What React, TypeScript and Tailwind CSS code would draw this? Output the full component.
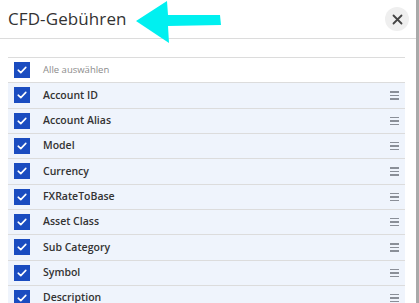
import React from "react";

const items = [
  "Account ID",
  "Account Alias",
  "Model",
  "Currency",
  "FXRateToBase",
  "Asset Class",
  "Sub Category",
  "Symbol",
  "Description",
  "Conid",
];

function Check() {
  return (
    <div className="w-4 h-4 bg-[#1a4cc0] flex items-center justify-center shrink-0">
      <svg width="10" height="8" viewBox="0 0 10 8" fill="none">
        <path d="M1.2 4.2 L3.8 6.6 L8.8 1.4" stroke="white" strokeWidth="1.6" strokeLinecap="round" strokeLinejoin="round" />
      </svg>
    </div>
  );
}

function Handle() {
  return (
    <div className="flex flex-col gap-[2px] w-[9px]">
      <div className="h-[1.5px] bg-[#8a8f98]" />
      <div className="h-[1.5px] bg-[#8a8f98]" />
      <div className="h-[1.5px] bg-[#8a8f98]" />
    </div>
  );
}

export default function App() {
  return (
    <div className="w-[419px] h-[303px] overflow-hidden flex bg-white" style={{ fontFamily: "'Open Sans', 'Liberation Sans', sans-serif" }}>
      <div className="w-[416px] h-full flex flex-col overflow-hidden">
        <div className="h-[39px] shrink-0 flex items-center justify-between pl-[8px] pr-[7px] border-b border-[#dcdcdc] relative">
          <span className="text-[17px] text-[#333] tracking-[0.1px]">CFD-Gebühren</span>
          <svg className="absolute left-[133px] top-[0px]" width="90" height="44" viewBox="0 0 90 44">
            <path d="M3 21 L34 1 L35 15 L87 15 L88 25 L35 26 L36 43 Z" fill="#00f0f0" />
          </svg>
          <button className="w-6 h-6 rounded-full bg-[#efefef] flex items-center justify-center">
            <svg width="11" height="11" viewBox="0 0 11 11">
              <path d="M1.5 1.5 L9.5 9.5 M9.5 1.5 L1.5 9.5" stroke="#444" strokeWidth="1.8" strokeLinecap="round" />
            </svg>
          </button>
        </div>
        <div className="shrink-0 mt-[18px] mx-[8px] w-[397px] border-t border-[#dcdcdc]">
          <div className="h-[25.33px] flex items-center pl-[6px] border-b border-[#dcdcdc]">
            <Check />
            <span className="ml-[13px] text-[9.5px] text-[#8c8c8c]">Alle auswählen</span>
          </div>
          {items.map((it) => (
            <div key={it} className="h-[25.33px] flex items-center pl-[6px] pr-[6px] bg-[#eff4fc] border-b border-[#dcdcdc]">
              <Check />
              <span className="ml-[13px] text-[10.5px] font-semibold text-[#333] flex-1">{it}</span>
              <Handle />
            </div>
          ))}
        </div>
      </div>
      <div className="w-[3px] h-full bg-[#a9a9a9]" />
    </div>
  );
}
